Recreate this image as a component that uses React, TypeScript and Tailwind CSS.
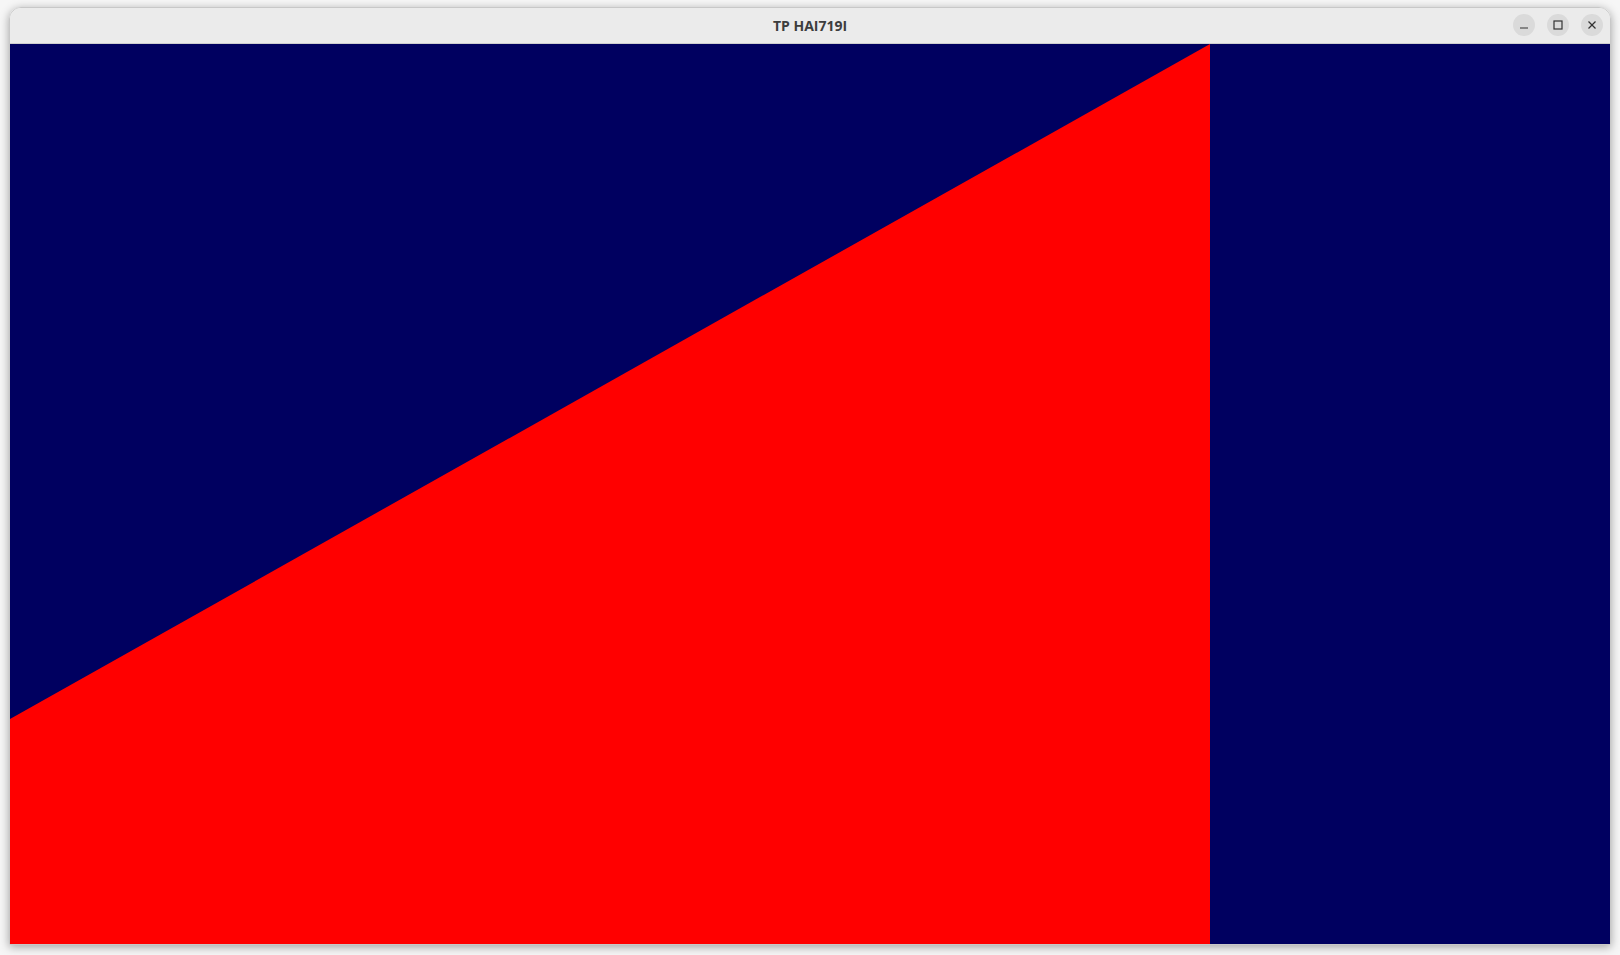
import React from "react";

export default function App() {
  return (
    <div className="w-[1620px] h-[955px] bg-[#f6f6f6] overflow-hidden pl-[10px] pt-[8px]">
      <div className="w-[1600px] flex flex-col rounded-t-[12px] border border-[#c8c8c8] shadow-[0_2px_10px_rgba(0,0,0,0.35)] overflow-hidden box-content -ml-[1px] -mt-[1px]">
        <div className="h-[36px] bg-[#ebebeb] border-b border-[#cfcfcf] relative flex items-center justify-center">
          <span
            className="text-[14px] font-bold text-[#3d3d3d]"
            style={{ fontFamily: '"Open Sans", "Noto Sans", sans-serif' }}
          >
            TP HAI719I
          </span>
          <div className="absolute right-[7px] top-[6px] flex gap-[12px]">
            <div className="w-[22px] h-[22px] rounded-full bg-[#dadada] flex items-center justify-center">
              <svg width="10" height="10" viewBox="0 0 10 10">
                <line x1="1" y1="8" x2="9" y2="8" stroke="#333" strokeWidth="1.2" />
              </svg>
            </div>
            <div className="w-[22px] h-[22px] rounded-full bg-[#dadada] flex items-center justify-center">
              <svg width="10" height="10" viewBox="0 0 10 10">
                <rect x="1" y="1" width="8" height="8" fill="none" stroke="#333" strokeWidth="1.2" />
              </svg>
            </div>
            <div className="w-[22px] h-[22px] rounded-full bg-[#dadada] flex items-center justify-center">
              <svg width="10" height="10" viewBox="0 0 10 10">
                <line x1="1.5" y1="1.5" x2="8.5" y2="8.5" stroke="#333" strokeWidth="1.3" />
                <line x1="8.5" y1="1.5" x2="1.5" y2="8.5" stroke="#333" strokeWidth="1.3" />
              </svg>
            </div>
          </div>
        </div>
        <div className="h-[900px] bg-[#000060]">
          <svg width="1600" height="900" viewBox="0 0 1600 900" className="block">
            <polygon points="0,675 1200,0 1200,900 0,900" fill="#ff0000" />
          </svg>
        </div>
      </div>
    </div>
  );
}
